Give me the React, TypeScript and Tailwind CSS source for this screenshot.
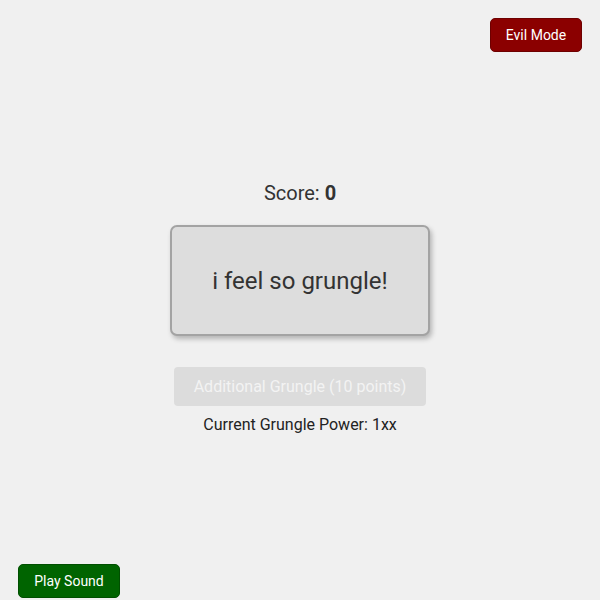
export default function App() {
  return (
    <div
      className="relative w-[600px] h-[600px] bg-[#f0f0f0] text-[#333333]"
      style={{ fontFamily: "Roboto, 'Liberation Sans', sans-serif" }}
    >
      <button className="absolute top-[18px] right-[18px] w-[92px] h-[34px] rounded-[5px] bg-[#8b0000] border border-[#6e0000] text-white text-[14px] flex items-center justify-center">
        Evil Mode
      </button>
      <div className="flex flex-col items-center pt-[179px]">
        <div className="text-[20px] leading-[28px]">
          Score: <span className="font-bold">0</span>
        </div>
        <button className="mt-[18px] w-[260px] h-[111px] rounded-[7px] bg-[#dddddd] border-2 border-[#a3a3a3] shadow-[2px_3px_5px_rgba(0,0,0,0.25)] text-[24px] text-[#333333] flex items-center justify-center">
          i feel so grungle!
        </button>
        <button
          disabled
          className="mt-[31px] w-[252px] h-[39px] rounded-[4px] bg-[#dcdcdc] text-[#f3f3f3] text-[16px] flex items-center justify-center"
        >
          Additional Grungle (10 points)
        </button>
        <div className="mt-[7px] text-[16px] leading-[24px] text-[#222222]">
          Current Grungle Power: 1xx
        </div>
      </div>
      <button className="absolute left-[18px] bottom-[2px] w-[102px] h-[34px] rounded-[5px] bg-[#006400] border border-[#004f00] text-white text-[14px] flex items-center justify-center">
        Play Sound
      </button>
    </div>
  );
}
